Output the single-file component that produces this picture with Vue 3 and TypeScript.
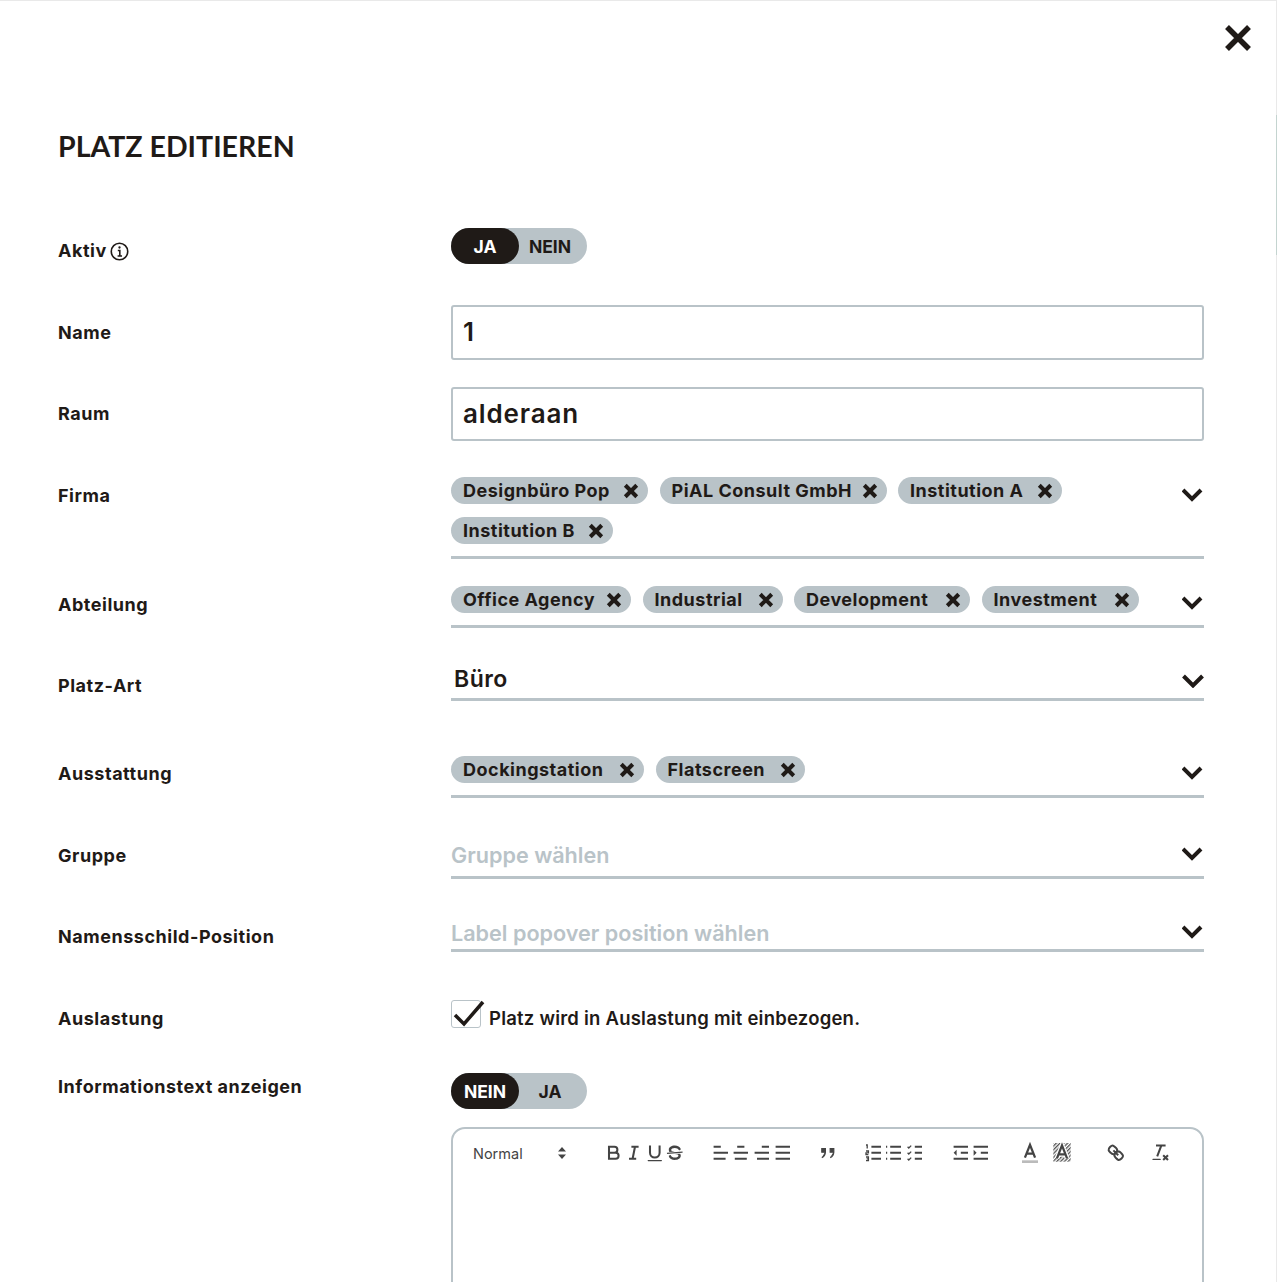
<template>
  <div class="page">
    <span class="edge"></span>
    <div class="head">
      <svg class="close" viewBox="0 0 26 26"><path d="M2 2l22 22M24 2L2 24" /></svg>
    </div>
    <h1 class="title">PLATZ EDITIEREN</h1>

    <div class="row row-aktiv">
      <div class="label lb-11">
        Aktiv
        <svg class="info" viewBox="0 0 18 18">
          <circle cx="9" cy="9" r="7.800" />
          <path d="M7.400 8h1.900v5M7.200 13.200h4.200" />
          <circle class="dot" cx="9" cy="5.200" r="1.100" />
        </svg>
      </div>
      <div class="toggle">
        <span class="opt on">JA</span>
        <span class="opt">NEIN</span>
      </div>
    </div>

    <div class="row row-name">
      <div class="label lb-16">Name</div>
      <div class="input h55">1</div>
    </div>

    <div class="row row-raum">
      <div class="label lb-15">Raum</div>
      <div class="input h54">alderaan</div>
    </div>

    <div class="row row-firma">
      <div class="label lb-7">Firma</div>
      <div class="select pb-12">
        <div class="chips">
          <span v-for="c in firma" :key="c.text" class="chip" :style="{ width: c.width + 'px' }">{{ c.text }}<svg viewBox="0 0 14 14"><path d="M2 2l10 10M12 2L2 12" /></svg></span>
        </div>
        <svg class="chev" viewBox="0 0 22 14"><path d="M1 2l9 9 9-9" /></svg>
      </div>
    </div>

    <div class="row row-abteilung">
      <div class="label lb-7">Abteilung</div>
      <div class="select pb-12">
        <div class="chips">
          <span v-for="c in abteilung" :key="c.text" class="chip" :style="{ width: c.width + 'px' }">{{ c.text }}<svg viewBox="0 0 14 14"><path d="M2 2l10 10M12 2L2 12" /></svg></span>
        </div>
        <svg class="chev" viewBox="0 0 22 14"><path d="M1 2l9 9 9-9" /></svg>
      </div>
    </div>

    <div class="row row-art">
      <div class="label lb-14">Platz-Art</div>
      <div class="select h41">
        <span class="value">Büro</span>
        <svg class="chev big" viewBox="0 0 22 14"><path d="M1.500 2l9.500 9.500L20.500 2" /></svg>
      </div>
    </div>

    <div class="row row-ausstattung">
      <div class="label lb-6">Ausstattung</div>
      <div class="select pb-12">
        <div class="chips">
          <span v-for="c in ausstattung" :key="c.text" class="chip" :style="{ width: c.width + 'px' }">{{ c.text }}<svg viewBox="0 0 14 14"><path d="M2 2l10 10M12 2L2 12" /></svg></span>
        </div>
        <svg class="chev" viewBox="0 0 22 14"><path d="M1 2l9 9 9-9" /></svg>
      </div>
    </div>

    <div class="row row-gruppe">
      <div class="label lb-8">Gruppe</div>
      <div class="select h43">
        <span class="placeholder">Gruppe wählen</span>
        <svg class="chev" viewBox="0 0 22 14"><path d="M1 2l9 9 9-9" /></svg>
      </div>
    </div>

    <div class="row row-position">
      <div class="label lb-10">Namensschild-Position</div>
      <div class="select h37">
        <span class="placeholder">Label popover position wählen</span>
        <svg class="chev" viewBox="0 0 22 14"><path d="M1 2l9 9 9-9" /></svg>
      </div>
    </div>

    <div class="row row-auslastung">
      <div class="label lb-7">Auslastung</div>
      <div class="check-line">
        <span class="checkbox">
          <svg viewBox="0 0 34 30"><path d="M3 15l9 9L31 2" /></svg>
        </span>
        <span class="check-text">Platz wird in Auslastung mit einbezogen.</span>
      </div>
    </div>

    <div class="row row-info">
      <div class="label lb-2">Informationstext anzeigen</div>
      <div class="toggle">
        <span class="opt on">NEIN</span>
        <span class="opt">JA</span>
      </div>
    </div>

    <div class="row row-editor">
      <div></div>
      <div class="editor">
        <div class="toolbar">
          <div class="picker">
            <span>Normal</span>
            <svg viewBox="0 0 10 14"><path class="fill" d="M5 1l4 4.500H1zM5 13L1 8.500h8z" /></svg>
          </div>
          <div class="formats">
            <svg viewBox="0 0 18 18"><path d="M5 4h4.500a2.500 2.500 0 0 1 0 5H5zM5 9h5.500a2.500 2.500 0 0 1 0 5H5z" /></svg>
            <svg viewBox="0 0 18 18"><path d="M7 4h6M5 14h6M8 14l2-10" /></svg>
            <svg viewBox="0 0 18 18"><path d="M5 3v6a4 4 0 0 0 8 0V3" /><rect class="fill" x="3" y="15" width="12" height="1" rx=".5" /></svg>
            <svg viewBox="0 0 18 18"><path class="thin" d="M15.500 8.500l-13 1" /><path class="fill" d="M9 8C6.500 7.800 6 7.500 6 6.500 6 5.800 7.300 5 9 5c1.600 0 2.800.7 3 1.300a1 1 0 0 0 1.900-.6C13.400 4.100 11.400 3 9 3 6.200 3 4 4.500 4 6.500c0 .7.200 1.300.5 1.800zM9 10c2.500.2 3 .5 3 1.500 0 .7-1.300 1.500-3 1.500-1.600 0-2.800-.7-3-1.300a1 1 0 1 0-1.900.6C4.600 13.900 6.600 15 9 15c2.800 0 5-1.500 5-3.500 0-.7-.2-1.300-.5-1.800z" /></svg>
          </div>
          <div class="formats">
            <svg viewBox="0 0 18 18"><path d="M3 9h12M3 14h10M3 4h6" /></svg>
            <svg viewBox="0 0 18 18"><path d="M3 9h12M4 14h10M6 4h6" /></svg>
            <svg viewBox="0 0 18 18"><path d="M3 9h12M5 14h10M9 4h6" /></svg>
            <svg viewBox="0 0 18 18"><path d="M3 9h12M3 14h12M3 4h12" /></svg>
          </div>
          <div class="formats">
            <svg viewBox="0 0 18 18"><path class="solid" d="M4 5.500h3v3H4zM11 5.500h3v3h-3zM7 8c0 4-3 5-3 5M14 8c0 4-3 5-3 5" /></svg>
          </div>
          <div class="formats">
            <svg viewBox="0 0 18 18"><path d="M7 4h8M7 9h8M7 14h8" /><path class="thin" d="M2.500 2.500h1v3M2.500 7.500h2v1.500h-2v1.500h2M2.500 12.500h2v3h-2M3 14h1.500" /></svg>
            <svg viewBox="0 0 18 18"><path d="M6 4h9M6 9h9M6 14h9" /><path d="M2.500 4h1M2.500 9h1M2.500 14h1" /></svg>
            <svg viewBox="0 0 18 18"><path d="M9 4h6M9 14h6M9 9h6" /><path class="thin" d="M3 4l1 1 2-2M3 14l1 1 2-2M3 9l1 1 2-2" /></svg>
          </div>
          <div class="formats">
            <svg viewBox="0 0 18 18"><path d="M3 14h12M3 4h12M9 9h6" /><path class="fill" d="M5.500 6.500v5L3 9z" /></svg>
            <svg viewBox="0 0 18 18"><path d="M3 14h12M3 4h12M9 9h6" /><path class="fill" d="M3 6.500v5L5.500 9z" /></svg>
          </div>
          <div class="formats colors">
            <svg viewBox="0 0 18 18"><path class="light" d="M3 15.500h12" /><path d="M5.200 12.500L9 2.800l3.800 9.700M11.600 9.500H6.400" /></svg>
            <svg viewBox="0 0 18 18">
              <defs>
                <pattern id="hatch" width="2" height="2" patternUnits="userSpaceOnUse" patternTransform="rotate(45)">
                  <rect class="hatch-line" width="1" height="2" />
                </pattern>
              </defs>
              <rect class="hatch" x="2.500" y="1.500" width="13" height="14" />
              <path class="halo" d="M5.200 13L9 3.300l3.800 9.700M11.600 10H6.400" />
              <path d="M5.200 13L9 3.300l3.800 9.700M11.600 10H6.400" />
            </svg>
          </div>
          <div class="formats">
            <svg viewBox="0 0 18 18"><path d="M7 7l4 4M8.900 4.600a3.500 3.500 0 0 1 .4 4.700 3.500 3.500 0 0 1-4.700-.4C3.200 7.500 2 6.400 4.200 4.200s3.300-1 4.700.4zM13.400 9.100a3.500 3.500 0 0 0-4.700-.4 3.500 3.500 0 0 0 .4 4.700c1.400 1.400 2.500 2.500 4.700.4s1-3.300-.4-4.700z" /></svg>
          </div>
          <div class="formats">
            <svg viewBox="0 0 18 18"><path d="M5 3h8M6 12l3.400-9M11 11l4 4M15 11l-4 4" /><rect class="fill" x="2" y="14" width="7" height="1" rx=".5" /></svg>
          </div>
        </div>
      </div>
    </div>
  </div>
</template>

<script setup lang="ts">
interface Chip {
  text: string
  width: number
}

const firma: Chip[] = [
  { text: 'Designbüro Pop', width: 197 },
  { text: 'PiAL Consult GmbH', width: 227 },
  { text: 'Institution A', width: 164 },
  { text: 'Institution B', width: 162 },
]
const abteilung: Chip[] = [
  { text: 'Office Agency', width: 180 },
  { text: 'Industrial', width: 140 },
  { text: 'Development', width: 176 },
  { text: 'Investment', width: 157 },
]
const ausstattung: Chip[] = [
  { text: 'Dockingstation', width: 193 },
  { text: 'Flatscreen', width: 149 },
]
</script>

<style>
html,
body {
  margin: 0;
  background: #fff;
}
</style>

<style scoped>
.page {
  position: relative;
  box-sizing: border-box;
  width: 1277px;
  height: 1282px;
  overflow: hidden;
  padding: 24px 0 0 58px;
  border-top: 1px solid #e9e9e9;
  font-family: Inter, "Open Sans", sans-serif;
  color: #1f1a17;
}
/* thin scroll edge on the right, with the tinted part near the top */
.edge {
  position: absolute;
  top: 0;
  bottom: 0;
  right: 0;
  width: 1px;
  background: linear-gradient(#e9e9e9 0 114px, #c4d4d0 114px 254px, #e9e9e9 254px);
}
.head {
  display: flex;
  justify-content: flex-end;
  padding-right: 26px;
}
.close {
  width: 26px;
  height: 26px;
}
.close path {
  fill: none;
  stroke: #1f1a17;
  stroke-width: 5.500;
}
.title {
  margin: 79px 0 0;
  font-family: Lato, sans-serif;
  font-size: 28.500px;
  line-height: 32px;
  font-weight: 700;
}
.row {
  display: grid;
  grid-template-columns: 393px 753px;
  align-items: start;
}
.row-aktiv { margin-top: 66px; }
.row-name { margin-top: 41px; }
.row-raum { margin-top: 27px; }
.row-firma { margin-top: 36px; }
.row-abteilung { margin-top: 27px; }
.row-art { margin-top: 32px; }
.row-ausstattung { margin-top: 55px; }
.row-gruppe { margin-top: 38px; }
.row-position { margin-top: 36px; }
.row-auslastung { margin-top: 48px; }
.row-info { margin-top: 42px; }
.row-editor { margin-top: 18px; }

.label {
  display: flex;
  align-items: center;
  gap: 3px;
  font-size: 18px;
  line-height: 24px;
  font-weight: 700;
  letter-spacing: .53px;
}
.lb-2 { padding-top: 2px; }
.lb-6 { padding-top: 6px; }
.lb-7 { padding-top: 7px; }
.lb-8 { padding-top: 8px; }
.lb-10 { padding-top: 10px; }
.lb-11 { padding-top: 11px; }
.lb-14 { padding-top: 14px; }
.lb-15 { padding-top: 15px; }
.lb-16 { padding-top: 16px; }
.info {
  width: 19px;
  height: 19px;
}
.info circle,
.info path {
  fill: none;
  stroke: #1f1a17;
  stroke-width: 1.500;
}
.info .dot {
  fill: #1f1a17;
  stroke: none;
}
.toggle {
  display: flex;
  width: 136px;
  height: 36px;
  border-radius: 18px;
  background: #b9c3c8;
  font-size: 17.500px;
  font-weight: 700;
}
.opt {
  flex: 1;
  display: flex;
  align-items: center;
  justify-content: center;
  border-radius: 18px;
}
.opt:last-child {
  padding-right: 6px;
}
.opt.on {
  background: #1f1a17;
  color: #fff;
  flex: none;
  width: 68px;
}
.input {
  box-sizing: border-box;
  display: flex;
  align-items: center;
  padding: 0 10px 2px;
  border: 2px solid #b9c3c8;
  border-radius: 3px;
  font-size: 26px;
  font-weight: 600;
  letter-spacing: .85px;
}
.h55 { height: 55px; }
.h54 { height: 54px; }
.select {
  box-sizing: border-box;
  display: flex;
  justify-content: space-between;
  align-items: flex-start;
  border-bottom: 3px solid #b9c3c8;
}
.pb-12 { padding-bottom: 12px; }
.h41 { height: 41px; }
.h43 { height: 43px; }
.h37 { height: 37px; }
.chips {
  display: flex;
  flex-wrap: wrap;
  gap: 13px 11.500px;
  width: 700px;
}
.chip {
  box-sizing: border-box;
  display: flex;
  align-items: center;
  justify-content: space-between;
  height: 27px;
  padding: 0 9px 0 12px;
  border-radius: 14px;
  background: #b9c3c8;
  font-size: 18px;
  font-weight: 700;
  letter-spacing: .5px;
  white-space: nowrap;
}
.chip svg {
  width: 16px;
  height: 16px;
}
.chip path {
  fill: none;
  stroke: #1f1a17;
  stroke-width: 3.500;
}
.chev {
  width: 22px;
  height: 14px;
  margin-top: 10px;
  flex: none;
}
.chev.big {
  margin-top: 14px;
}
.row-firma .chev,
.row-gruppe .chev {
  margin-top: 11px;
}
.chev path {
  fill: none;
  stroke: #1f1a17;
  stroke-width: 4;
}
.value {
  padding-left: 3px;
  font-size: 23px;
  line-height: 38px;
  font-weight: 600;
  letter-spacing: .5px;
}
.placeholder {
  font-size: 21.600px;
  line-height: 38px;
  font-weight: 600;
  color: #b9c3c8;
}
.h37 .placeholder {
  line-height: 36px;
}
.check-line {
  display: flex;
  align-items: center;
  height: 28px;
}
.checkbox {
  position: relative;
  box-sizing: border-box;
  width: 30px;
  height: 28px;
  border: 1px solid #b9c3c8;
  border-radius: 3px;
}
.checkbox svg {
  position: absolute;
  left: 0;
  top: -1px;
  width: 34px;
  height: 30px;
}
.checkbox path {
  fill: none;
  stroke: #1f1a17;
  stroke-width: 3.500;
}
.check-text {
  margin: 8px 0 0 8px;
  font-size: 18.500px;
  font-weight: 600;
  letter-spacing: .22px;
}
.editor {
  box-sizing: border-box;
  height: 300px;
  border: 2px solid #b9c3c8;
  border-radius: 14px 14px 0 0;
}
.toolbar {
  display: flex;
  align-items: center;
  height: 24px;
  padding: 12px 0 0 20px;
}
.picker {
  display: flex;
  align-items: center;
  justify-content: space-between;
  width: 94px;
  margin-right: 36px;
  font-size: 14.500px;
  color: #444;
}
.picker svg {
  width: 10px;
  height: 14px;
}
.formats {
  display: flex;
  align-items: center;
  margin-right: 25px;
}
.formats svg {
  flex: none;
  width: 21.600px;
  height: 21.600px;
  margin: 0 -.5px;
}
.formats path,
.formats rect {
  fill: none;
  stroke: #444;
  stroke-width: 1.700;
}
.picker .fill,
.formats .fill {
  fill: #444;
  stroke: none;
}
.formats .thin {
  stroke-width: 1.100;
}
.formats .solid {
  fill: #444;
  stroke-width: 1;
}
.formats .light {
  stroke: #bbb;
  stroke-width: 2;
}
.formats .hatch {
  stroke: none;
  fill: url(#hatch);
}
.formats .hatch-line {
  stroke: none;
  fill: #555;
}
.formats .halo {
  stroke: #fff;
  stroke-width: 3.500;
}
.colors {
  margin: 0 31.700px 0 1.200px;
}
.colors svg {
  width: 24px;
  height: 24px;
  margin: 0;
}
.colors svg + svg {
  margin-left: 8px;
}
</style>
